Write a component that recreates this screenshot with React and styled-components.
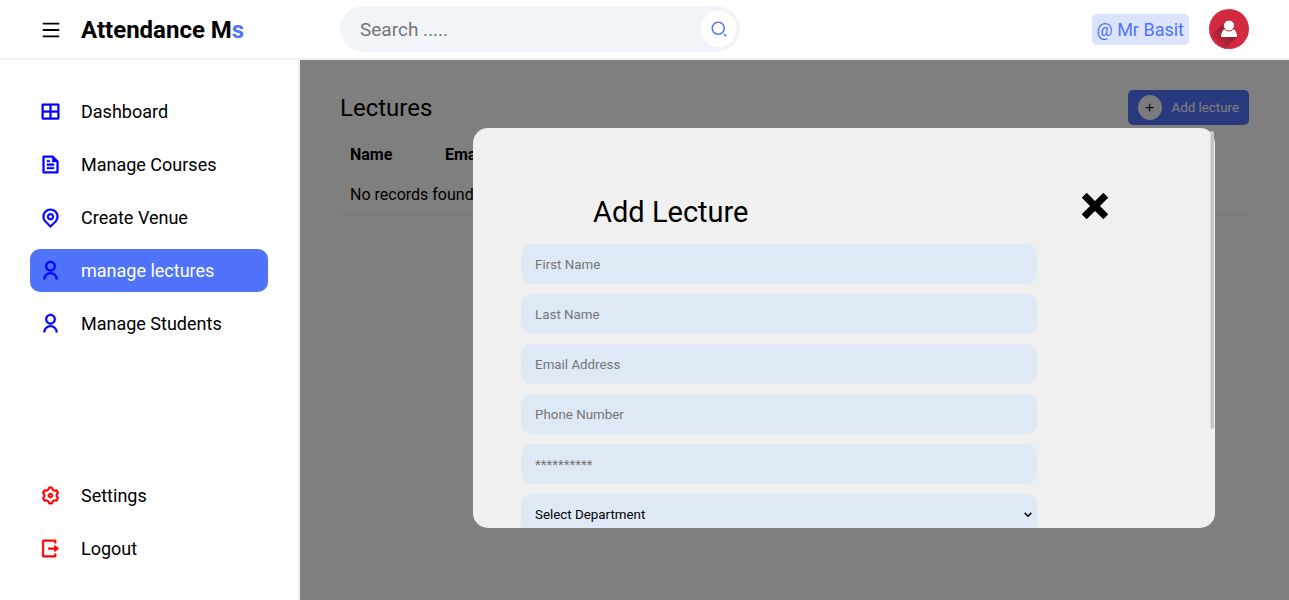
import React from "react";
import styled, { createGlobalStyle } from "styled-components";
import {
  RiMenuLine,
  RiSearch2Line,
  RiLayoutGridLine,
  RiFileTextLine,
  RiMapPinLine,
  RiUserLine,
  RiSettings3Line,
  RiLogoutBoxRLine,
  RiAddLine,
} from "react-icons/ri";

const GlobalStyle = createGlobalStyle`
  *, *::before, *::after {
    box-sizing: border-box;
    margin: 0;
    padding: 0;
  }
  body {
    font-family: Roboto, "Liberation Sans", sans-serif;
    font-size: 16px;
    color: #000;
    background: #fff;
  }
  button, input, select {
    font-family: inherit;
    border: none;
    outline: none;
  }
`;

const Page = styled.div`
  display: flex;
  flex-direction: column;
  height: 100vh;
`;

const Header = styled.header`
  display: flex;
  align-items: center;
  height: 60px;
  flex: none;
  border-bottom: 2px solid #f1f1f1;
`;

const Brand = styled.div`
  display: flex;
  align-items: center;
  gap: 19px;
  width: 300px;
  padding: 2px 0 0 40px;
`;

const MenuButton = styled.button`
  display: flex;
  font-size: 22px;
  color: #000;
  background: none;
  cursor: pointer;
`;

const Logo = styled.h1`
  font-size: 24px;
  line-height: 28px;
  font-weight: 700;
`;

const Accent = styled.span`
  color: #5073fb;
`;

const Toolbar = styled.div`
  flex: 1;
  display: flex;
  align-items: center;
  justify-content: space-between;
  padding: 0 40px;
`;

const SearchBox = styled.form`
  display: flex;
  align-items: center;
  width: 400px;
  height: 46px;
  padding: 0 4px 0 20px;
  border-radius: 23px;
  background: #f1f4f9;
`;

const SearchInput = styled.input`
  flex: 1;
  min-width: 0;
  font-size: 19px;
  background: transparent;
  &::placeholder {
    color: #757575;
  }
`;

const SearchButton = styled.button`
  display: flex;
  align-items: center;
  justify-content: center;
  width: 35px;
  height: 36px;
  border-radius: 50%;
  background: #fff;
  color: #5073fb;
  font-size: 18px;
  cursor: pointer;
`;

const Profile = styled.div`
  display: flex;
  align-items: center;
  gap: 20px;
`;

const UserTag = styled.span`
  padding: 5px;
  border-radius: 5px;
  font-size: 18px;
  line-height: 21px;
  color: #5073fb;
  background: #dce3ff;
`;

const Avatar = styled.svg`
  width: 40px;
  height: 40px;
`;

const Body = styled.div`
  flex: 1;
  display: flex;
  min-height: 0;
`;

const Sidebar = styled.nav`
  width: 300px;
  flex: none;
  display: flex;
  flex-direction: column;
  justify-content: space-between;
  padding: 30px;
  border-right: 2px solid #f1f1f1;
`;

const NavList = styled.ul`
  display: flex;
  flex-direction: column;
  gap: 10px;
  list-style: none;
`;

const NavLink = styled.a`
  display: flex;
  align-items: center;
  gap: 20px;
  height: 43px;
  padding: 0 10px;
  border-radius: 10px;
  font-size: 18px;
  text-decoration: none;
  color: ${(p) => (p.$active ? "#fff" : "#000")};
  background: ${(p) => (p.$active ? "#5073fb" : "transparent")};
  svg {
    flex: none;
    font-size: 21px;
    color: ${(p) => p.$tone};
    stroke-width: 0.5;
    overflow: visible;
  }
`;

const Main = styled.main`
  flex: 1;
  min-width: 0;
  position: relative;
  padding: 30px 40px;
`;

const TitleRow = styled.div`
  display: flex;
  align-items: center;
  justify-content: space-between;
  margin-bottom: 9px;
`;

const Title = styled.h2`
  font-size: 24px;
  font-weight: 400;
`;

const AddButton = styled.button`
  display: flex;
  align-items: center;
  gap: 10px;
  height: 35px;
  padding: 0 10px;
  border-radius: 5px;
  color: #fff;
  background: #5073fb;
  cursor: pointer;
`;

const Plus = styled.span`
  display: flex;
  align-items: center;
  justify-content: center;
  width: 24px;
  height: 25px;
  border-radius: 50%;
  color: #000;
  background: #f1f4f9;
`;

const Table = styled.table`
  width: 100%;
  table-layout: fixed;
  border-collapse: collapse;
  th, td {
    height: 40px;
    padding: 0 10px;
    text-align: left;
  }
  th:first-child {
    width: 95px;
  }
  td {
    padding-top: 2px;
    border-bottom: 1px solid #f1f1f1;
  }
`;

const Overlay = styled.div`
  position: absolute;
  inset: 0;
  display: flex;
  align-items: flex-start;
  justify-content: flex-end;
  padding-top: 68px;
  background: rgba(0, 0, 0, 0.5);
`;

const Modal = styled.section`
  position: relative;
  width: 75%;
  margin-right: 7.5%;
`;

const ModalScroll = styled.div`
  height: 400px;
  padding: 60px 0 0 48px;
  border-radius: 15px;
  background: #f0f0f0;
  overflow-y: auto;
  scrollbar-width: none;
`;

const ScrollThumb = styled.span`
  position: absolute;
  top: 3px;
  right: 1px;
  width: 4px;
  height: 298px;
  border-left: 1px solid #dcdcdc;
  border-radius: 2px;
  background: #c6c6c6;
`;

const ModalHead = styled.div`
  display: flex;
  align-items: flex-start;
  justify-content: space-between;
  height: 56px;
  padding: 5px 107px 0 72px;
`;

const ModalTitle = styled.h3`
  font-size: 29px;
  line-height: 38px;
  font-weight: 400;
`;

const CloseButton = styled.button`
  display: flex;
  background: none;
  cursor: pointer;
`;

const Form = styled.form`
  display: flex;
  flex-direction: column;
  gap: 10px;
  width: 516px;
  max-width: 100%;
  padding-bottom: 36px;
`;

const Field = styled.input`
  height: 40px;
  flex: none;
  padding: 0 14px;
  border-radius: 10px;
  background: #dfe9f5;
  &::placeholder {
    color: #757575;
  }
`;

const SelectWrap = styled.div`
  position: relative;
  display: flex;
  svg {
    position: absolute;
    right: 5px;
    top: 18px;
    pointer-events: none;
  }
`;

const Select = styled.select`
  flex: 1;
  height: 40px;
  padding: 0 14px;
  border-radius: 10px;
  color: #000;
  background: #dfe9f5;
  appearance: none;
`;

const mainLinks = [
  { label: "Dashboard", Icon: RiLayoutGridLine },
  { label: "Manage Courses", Icon: RiFileTextLine },
  { label: "Create Venue", Icon: RiMapPinLine },
  { label: "manage lectures", Icon: RiUserLine, active: true },
  { label: "Manage Students", Icon: RiUserLine },
];

const footLinks = [
  { label: "Settings", Icon: RiSettings3Line },
  { label: "Logout", Icon: RiLogoutBoxRLine, viewBox: "1.500 0 24 24" },
];

const fields = [
  { label: "First Name", type: "text" },
  { label: "Last Name", type: "text" },
  { label: "Email Address", type: "email" },
  { label: "Phone Number", type: "text" },
  { label: "Password", type: "password", placeholder: "**********" },
];

function Links({ items, tone }) {
  return (
    <NavList>
      {items.map(({ label, Icon, active, viewBox = "0 0 24 24" }) => (
        <li key={label}>
          <NavLink href="#" $active={active} $tone={tone}>
            <Icon viewBox={viewBox} />
            {label}
          </NavLink>
        </li>
      ))}
    </NavList>
  );
}

function UserPicture() {
  return (
    <Avatar viewBox="0 0 40 40" aria-hidden="true">
      <defs>
        <clipPath id="disc">
          <circle cx="20" cy="20" r="20" />
        </clipPath>
        <linearGradient id="shade" x1="0.7" y1="0.2" x2="0.2" y2="0.8">
          <stop offset="0" stopColor="#8e1c2d" />
          <stop offset="1" stopColor="#c4273e" />
        </linearGradient>
      </defs>
      <g clipPath="url(#disc)">
        <rect width="40" height="40" fill="#d32941" />
        <path d="M16 13L3 26L15 41L28 28L24 18Z" fill="url(#shade)" />
        <path
          d="M12 28C12 23 14 20.500 17 19.500H23C26 20.500 28 23 28 28Z"
          fill="#fff"
        />
        <circle
          cx="20"
          cy="16.500"
          r="5.500"
          fill="#fff"
          stroke="#b8243a"
          strokeWidth="1"
        />
      </g>
    </Avatar>
  );
}

export default function App() {
  return (
    <Page>
      <GlobalStyle />
      <Header>
        <Brand>
          <MenuButton aria-label="Menu">
            <RiMenuLine />
          </MenuButton>
          <Logo>
            Attendance M<Accent>s</Accent>
          </Logo>
        </Brand>
        <Toolbar>
          <SearchBox>
            <SearchInput aria-label="Search" placeholder="Search ....." />
            <SearchButton type="button" aria-label="Search">
              <RiSearch2Line />
            </SearchButton>
          </SearchBox>
          <Profile>
            <UserTag>@ Mr Basit</UserTag>
            <UserPicture />
          </Profile>
        </Toolbar>
      </Header>
      <Body>
        <Sidebar>
          <Links items={mainLinks} tone="#0000ff" />
          <Links items={footLinks} tone="#ff0000" />
        </Sidebar>
        <Main>
          <TitleRow>
            <Title>Lectures</Title>
            <AddButton>
              <Plus>
                <RiAddLine />
              </Plus>
              Add lecture
            </AddButton>
          </TitleRow>
          <Table>
            <thead>
              <tr>
                <th>Name</th>
                <th>Email</th>
              </tr>
            </thead>
            <tbody>
              <tr>
                <td colSpan={2}>No records found</td>
              </tr>
            </tbody>
          </Table>
          <Overlay>
            <Modal role="dialog" aria-labelledby="modal-title">
              <ModalScroll>
                <ModalHead>
                  <ModalTitle id="modal-title">Add Lecture</ModalTitle>
                  <CloseButton aria-label="Close">
                    <svg width="26" height="26" viewBox="0 0 26 26">
                      <path
                        d="M2.200 2.200L23.800 23.800M23.800 2.200L2.200 23.800"
                        stroke="#000"
                        strokeWidth="7"
                      />
                    </svg>
                  </CloseButton>
                </ModalHead>
                <Form>
                  {fields.map(({ label, type, placeholder }) => (
                    <Field
                      key={label}
                      type={type}
                      aria-label={label}
                      placeholder={placeholder || label}
                    />
                  ))}
                  <SelectWrap>
                    <Select aria-label="Department" defaultValue="">
                      <option value="">Select Department</option>
                    </Select>
                    <svg width="8" height="6" viewBox="0 0 8 6">
                      <path
                        d="M0.700 0.900L4 4.200L7.300 0.900"
                        fill="none"
                        stroke="#000"
                        strokeWidth="1.500"
                      />
                    </svg>
                  </SelectWrap>
                </Form>
              </ModalScroll>
              <ScrollThumb />
            </Modal>
          </Overlay>
        </Main>
      </Body>
    </Page>
  );
}
